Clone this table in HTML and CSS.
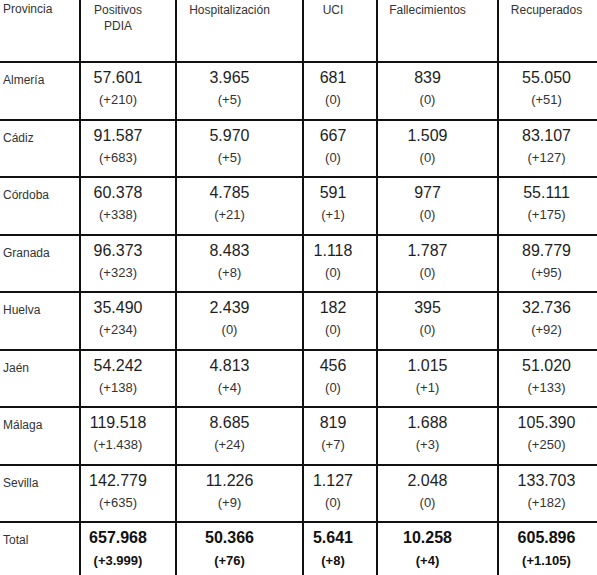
FILE: index.html
```html
<!DOCTYPE html>
<html lang="es">
<head>
    <meta charset="UTF-8">
    <meta name="viewport" content="width=device-width, initial-scale=1.0">
    <title>Datos COVID-19 Andalucía</title>
    <link rel="stylesheet" href="styles.css">
</head>
<body>
    <table class="datos">
        <colgroup>
            <col class="col-prov">
            <col class="col-pos">
            <col class="col-hosp">
            <col class="col-uci">
            <col class="col-fall">
            <col class="col-rec">
        </colgroup>
        <thead>
            <tr>
                <th class="label">Provincia</th>
                <th>Positivos<br>PDIA</th>
                <th>Hospitalización</th>
                <th class="uci">UCI</th>
                <th>Fallecimientos</th>
                <th>Recuperados</th>
            </tr>
        </thead>
        <tbody>
            <tr>
                <td class="label">Almería</td>
                <td><div class="num">57.601</div><div class="delta">(+210)</div></td>
                <td><div class="num">3.965</div><div class="delta">(+5)</div></td>
                <td class="uci"><div class="num">681</div><div class="delta">(0)</div></td>
                <td><div class="num">839</div><div class="delta">(0)</div></td>
                <td><div class="num">55.050</div><div class="delta">(+51)</div></td>
            </tr>
            <tr>
                <td class="label">Cádiz</td>
                <td><div class="num">91.587</div><div class="delta">(+683)</div></td>
                <td><div class="num">5.970</div><div class="delta">(+5)</div></td>
                <td class="uci"><div class="num">667</div><div class="delta">(0)</div></td>
                <td><div class="num">1.509</div><div class="delta">(0)</div></td>
                <td><div class="num">83.107</div><div class="delta">(+127)</div></td>
            </tr>
            <tr>
                <td class="label">Córdoba</td>
                <td><div class="num">60.378</div><div class="delta">(+338)</div></td>
                <td><div class="num">4.785</div><div class="delta">(+21)</div></td>
                <td class="uci"><div class="num">591</div><div class="delta">(+1)</div></td>
                <td><div class="num">977</div><div class="delta">(0)</div></td>
                <td><div class="num">55.111</div><div class="delta">(+175)</div></td>
            </tr>
            <tr>
                <td class="label">Granada</td>
                <td><div class="num">96.373</div><div class="delta">(+323)</div></td>
                <td><div class="num">8.483</div><div class="delta">(+8)</div></td>
                <td class="uci"><div class="num">1.118</div><div class="delta">(0)</div></td>
                <td><div class="num">1.787</div><div class="delta">(0)</div></td>
                <td><div class="num">89.779</div><div class="delta">(+95)</div></td>
            </tr>
            <tr>
                <td class="label">Huelva</td>
                <td><div class="num">35.490</div><div class="delta">(+234)</div></td>
                <td><div class="num">2.439</div><div class="delta">(0)</div></td>
                <td class="uci"><div class="num">182</div><div class="delta">(0)</div></td>
                <td><div class="num">395</div><div class="delta">(0)</div></td>
                <td><div class="num">32.736</div><div class="delta">(+92)</div></td>
            </tr>
            <tr>
                <td class="label">Jaén</td>
                <td><div class="num">54.242</div><div class="delta">(+138)</div></td>
                <td><div class="num">4.813</div><div class="delta">(+4)</div></td>
                <td class="uci"><div class="num">456</div><div class="delta">(0)</div></td>
                <td><div class="num">1.015</div><div class="delta">(+1)</div></td>
                <td><div class="num">51.020</div><div class="delta">(+133)</div></td>
            </tr>
            <tr>
                <td class="label">Málaga</td>
                <td><div class="num">119.518</div><div class="delta">(+1.438)</div></td>
                <td><div class="num">8.685</div><div class="delta">(+24)</div></td>
                <td class="uci"><div class="num">819</div><div class="delta">(+7)</div></td>
                <td><div class="num">1.688</div><div class="delta">(+3)</div></td>
                <td><div class="num">105.390</div><div class="delta">(+250)</div></td>
            </tr>
            <tr>
                <td class="label">Sevilla</td>
                <td><div class="num">142.779</div><div class="delta">(+635)</div></td>
                <td><div class="num">11.226</div><div class="delta">(+9)</div></td>
                <td class="uci"><div class="num">1.127</div><div class="delta">(0)</div></td>
                <td><div class="num">2.048</div><div class="delta">(0)</div></td>
                <td><div class="num">133.703</div><div class="delta">(+182)</div></td>
            </tr>
            <tr class="total">
                <td class="label">Total</td>
                <td><div class="num">657.968</div><div class="delta">(+3.999)</div></td>
                <td><div class="num">50.366</div><div class="delta">(+76)</div></td>
                <td class="uci"><div class="num">5.641</div><div class="delta">(+8)</div></td>
                <td><div class="num">10.258</div><div class="delta">(+4)</div></td>
                <td><div class="num">605.896</div><div class="delta">(+1.105)</div></td>
            </tr>
        </tbody>
    </table>
</body>
</html>
```

FILE: styles.css
```css
body {
    margin: 0;
    background-color: #ffffff;
    font-family: "Liberation Sans", Arial, sans-serif;
    color: #1e1e1e;
    overflow: hidden;
}

.datos {
    table-layout: fixed;
    width: 616px;
    border-collapse: separate;
    border-spacing: 0;
}

.col-prov { width: 81px; }
.col-pos { width: 96px; }
.col-hosp { width: 127px; }
.col-uci { width: 74px; }
.col-fall { width: 121px; }
.col-rec { width: 117px; }

th, td {
    border-right: 2px solid #111;
    border-bottom: 2px solid #111;
    vertical-align: top;
    text-align: center;
    padding: 0 20px 0 0;
}

thead tr {
    height: 63px;
}

tbody tr {
    height: 57.5px;
}

/* Header */
th {
    font-size: 12px;
    font-weight: normal;
    line-height: 16px;
    padding-top: 2px;
    color: #333;
}

th.label {
    padding-top: 2px;
}

.label {
    text-align: left;
    padding: 10px 0 0 3px;
    font-size: 12px;
    line-height: 14px;
    color: #333;
}

td {
    padding-top: 5px;
}

.uci {
    padding-right: 14px;
}

.num {
    font-size: 16px;
    line-height: 20px;
}

.delta {
    font-size: 13px;
    line-height: 20px;
    margin-top: 2px;
    color: #333;
}

/* Total row */
.total .num,
.total .delta {
    font-weight: bold;
    color: #111;
}

.total .delta {
    margin-top: 3px;
}
```
